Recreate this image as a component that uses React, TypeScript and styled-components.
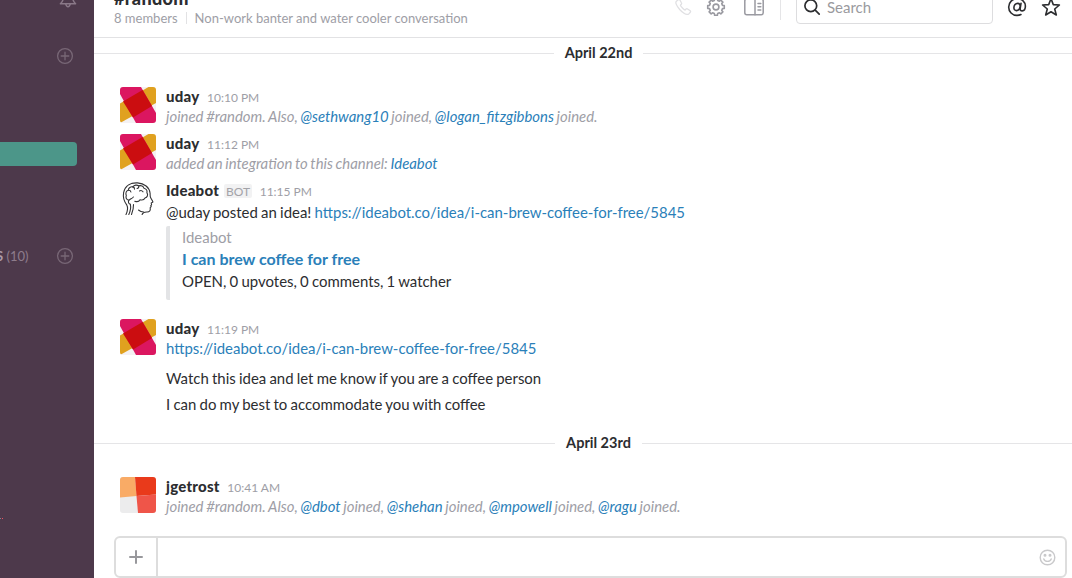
import React from 'react';
import styled, { createGlobalStyle } from 'styled-components';

const GlobalStyle = createGlobalStyle`
  * { box-sizing: border-box; }
  html, body { margin: 0; padding: 0; height: 100%; overflow: hidden; }
  body {
    font-family: Lato, 'Liberation Sans', sans-serif;
    font-size: 15px;
    color: #2c2d30;
    background: #fff;
  }
`;

const Layout = styled.div`
  display: flex;
  width: 1072px;
  height: 578px;
  overflow: hidden;
`;

const Sidebar = styled.aside`
  width: 94px;
  flex: none;
  height: 100%;
  background: #4d394b;
  overflow: hidden;
`;

const SidebarRow = styled.div<{ $gap?: number }>`
  display: flex;
  align-items: center;
  justify-content: space-between;
  height: 18px;
  padding-right: 20px;
  margin-top: ${(p) => p.$gap ?? 0}px;
`;

const BellSlot = styled.span`
  display: flex;
  margin-right: -3px;
`;

const SidebarLabel = styled.span`
  margin-left: -4px;
  font-size: 13px;
  line-height: 18px;
  color: #8d7c8b;
  white-space: pre;
`;

const SectionName = styled.span`
  font-weight: 700;
  color: #ab9ba9;
`;

const ActiveChannel = styled.div`
  width: 77px;
  height: 24px;
  margin-top: 77px;
  background: #4c9689;
  border-radius: 0 4px 4px 0;
`;

const Unread = styled.div`
  width: 3px;
  height: 1px;
  margin-top: 253px;
  background: linear-gradient(90deg, #8d7c8b 1px, #4d394b 1px 2px, #f0505f 2px);
`;

const Main = styled.main`
  flex: 1;
  min-width: 0;
  display: flex;
  flex-direction: column;
`;

const Header = styled.header`
  display: flex;
  justify-content: space-between;
  align-items: flex-start;
  height: 38px;
  flex: none;
  border-bottom: 1px solid #e2e2e4;
  padding-left: 20px;
`;

const ChannelInfo = styled.div`
  margin-top: -13px;
`;

const ChannelName = styled.h1`
  margin: 0;
  font-size: 18px;
  font-weight: 900;
  line-height: 22px;
  letter-spacing: 0.35px;
`;

const ChannelMeta = styled.div`
  display: flex;
  align-items: center;
  height: 18px;
  font-size: 13px;
  line-height: 18px;
  color: #9e9ea6;
  white-space: nowrap;
`;

const MetaRule = styled.span`
  width: 1px;
  height: 12px;
  margin: 0 8px;
  background: #e2e2e4;
`;

const Tools = styled.div`
  display: flex;
  align-items: center;
  height: 32px;
  margin-top: -9px;
  padding-right: 11px;
`;

const Tool = styled.span<{ $left?: number }>`
  display: flex;
  margin-left: ${(p) => p.$left ?? 0}px;
`;

const ToolRule = styled.span`
  width: 1px;
  height: 27px;
  margin-left: 16px;
  margin-right: 15px;
  margin-bottom: 1px;
  background: #e5e5e7;
`;

const Search = styled.div`
  display: flex;
  align-items: center;
  width: 197px;
  height: 32px;
  margin-top: 1px;
  padding: 0 0 2px 6px;
  border: 1px solid #dddddf;
  border-radius: 4px;
  color: #9a9a9e;
  gap: 6px;
`;

const DayDivider = styled.div<{ $gap: number }>`
  display: flex;
  align-items: center;
  height: 20px;
  margin-top: ${(p) => p.$gap}px;
  font-weight: 700;
  font-size: 14.5px;
  line-height: 20px;
  gap: 11px;
  margin-right: -31px;

  &::before, &::after {
    content: '';
    flex: 1;
    height: 1px;
    background: #e5e5e7;
  }
`;

const Feed = styled.section`
  flex: 1;
  min-height: 0;
  overflow: hidden;
`;

const Row = styled.article<{ $gap: number }>`
  display: flex;
  gap: 10px;
  padding-left: 26px;
  margin-top: ${(p) => p.$gap}px;
`;

const Avatar = styled.div`
  width: 36px;
  height: 36px;
  flex: none;
  border-radius: 3px;
  overflow: hidden;
  svg { display: block; }
`;

const Body = styled.div`
  flex: 1;
  margin-top: -1px;
  white-space: nowrap;
`;

const Meta = styled.div`
  display: flex;
  align-items: baseline;
  height: 20px;
  line-height: 20px;
`;

const Author = styled.span`
  font-weight: 900;
  letter-spacing: 0.25px;
`;

const Bot = styled.span`
  margin-left: 5px;
  padding: 1px 2px 0;
  font-size: 12px;
  line-height: 13px;
  color: #a3a3a8;
  background: #f2f2f3;
  border-radius: 2px;
`;

const Time = styled.span`
  margin-left: 7.5px;
  font-size: 12px;
  color: #9e9ea6;
`;

const Event = styled.div`
  height: 20px;
  line-height: 20px;
  font-size: 14.9px;
  font-style: italic;
  word-spacing: -0.8px;
  color: #9e9ea6;
`;

const Line = styled.div<{ $gap?: number }>`
  height: 22px;
  line-height: 22px;
  margin-top: ${(p) => p.$gap ?? 0}px;
  font-size: 14.95px;
  word-spacing: -0.6px;
`;

const Link = styled.a`
  color: #2a80b9;
`;

const Attachment = styled.div`
  height: 74px;
  margin-top: 3px;
  padding-left: 12px;
  border-left: 4px solid #e3e4e6;
  border-radius: 2px;
`;

const Source = styled(Line)`
  color: #9e9ea6;
`;

const Title = styled(Line)`
  font-size: 16px;
  font-weight: 700;
  word-spacing: 0;
  color: #2a80b9;
`;

const Composer = styled.footer`
  display: flex;
  height: 42px;
  flex: none;
  margin: 0 5px 0 20px;
  border: 2px solid #dddddd;
  border-radius: 6px;
`;

const AddButton = styled.button`
  display: flex;
  align-items: center;
  justify-content: center;
  width: 42px;
  padding: 0 1px 0 0;
  border: 0;
  border-right: 2px solid #dddddd;
  background: none;
`;

const Field = styled.div`
  flex: 1;
  display: flex;
  align-items: center;
  justify-content: flex-end;
  padding-right: 9px;
`;

const CirclePlus = () => (
  <svg width="18" height="18" viewBox="0 0 18 18" fill="none" stroke="#786776" strokeWidth="1.3" strokeLinecap="round">
    <circle cx="9" cy="9" r="7.4" />
    <path d="M9 5.2v7.6M5.2 9h7.6" />
  </svg>
);

const Bell = () => (
  <svg width="18" height="18" viewBox="0 0 18 18" fill="none" stroke="#8a7988" strokeWidth="1.5" strokeLinejoin="round" strokeLinecap="round">
    <path d="M9 1.5C5.6 1.5 4.6 4.5 4.3 8c-.2 2.8-1 4-2.9 5.700h15.200C14.700 12 13.900 10.800 13.700 8 13.400 4.500 12.400 1.500 9 1.500z" />
    <path d="M6.800 14.200c.4 1.700 1.200 2.500 2.200 2.500s1.800-.8 2.200-2.500" />
  </svg>
);

const Phone = () => (
  <svg width="18" height="18" viewBox="0 0 18 18" fill="none" stroke="#e0e0e3" strokeWidth="1.3" strokeLinejoin="round">
    <path d="M4.300 1.700 2.400 3.200C1.200 4.200 2 7.300 5.700 11.500c4 4.300 7.500 5.600 9.100 4.400l1.500-1.600c.5-.5.4-1.100-.1-1.500l-2.600-1.900c-.5-.4-1.100-.3-1.500.1l-1 1c-.8-.1-4.600-3.800-4.700-4.900l.9-.9c.4-.4.4-.9.1-1.400L5.800 1.900c-.4-.5-1-.6-1.500-.2z" />
  </svg>
);

const gearPath = (() => {
  const points: string[] = [];
  const teeth = 8;
  for (let i = 0; i < teeth; i++) {
    const base = (i * 2 * Math.PI) / teeth - Math.PI / 2;
    [[-0.25, 6.7], [-0.17, 8.4], [0.17, 8.4], [0.25, 6.7]].forEach(([offset, radius]) => {
      points.push(`${(10 + radius * Math.cos(base + offset)).toFixed(2)} ${(10 + radius * Math.sin(base + offset)).toFixed(2)}`);
    });
  }
  return `M${points.join('L')}Z`;
})();

const Gear = () => (
  <svg width="20" height="20" viewBox="0 0 20 20" fill="none" stroke="#9a9aa1" strokeWidth="1.6" strokeLinejoin="round">
    <path d={gearPath} />
    <circle cx="10" cy="10" r="2.9" />
  </svg>
);

const Panel = () => (
  <svg width="20" height="18" viewBox="0 0 20 18" fill="none" stroke="#9a9aa1" strokeWidth="1.5" strokeLinecap="round">
    <rect x=".8" y="1" width="18.4" height="15.8" rx="2" />
    <path d="M11 1v15.800M14 5.500h2.800M14 8.800h2.800M14 12h2.800" />
  </svg>
);

const Magnifier = () => (
  <svg width="18" height="18" viewBox="0 0 18 18" fill="none" stroke="#2c2d30" strokeWidth="1.7" strokeLinecap="round">
    <circle cx="7.8" cy="7.8" r="5.9" />
    <path d="m12.200 12.200 4 4" />
  </svg>
);

const At = () => (
  <svg width="20" height="20" viewBox="0 0 20 20" fill="none" stroke="#2c2d30" strokeWidth="1.6" strokeLinecap="round">
    <path d="M14 17.500c-1.200.6-2.500.9-4 .9A8.200 8.200 0 0 1 1.700 10 8.300 8.300 0 0 1 10 1.700c4.900 0 8.400 3.100 8.400 7.400 0 2.900-1.200 4.800-3.200 4.800-1.600 0-2.200-1-2-2.500l.8-5" />
    <path d="M13.100 9.900c-.4 2.300-1.800 3.700-3.600 3.700-1.600 0-2.600-1.200-2.600-2.900 0-2.400 1.600-4.300 3.800-4.300 1.700 0 2.700 1.300 2.400 3.500z" />
  </svg>
);

const Star = () => (
  <svg width="20" height="20" viewBox="0 0 20 20" fill="none" stroke="#2c2d30" strokeWidth="1.6" strokeLinejoin="round">
    <path d="m10 1.700 2.300 5.900 6.100.4-4.700 4 1.600 6L10 14.700 4.700 18l1.600-6L1.600 8l6.100-.4z" />
  </svg>
);

const Plus = () => (
  <svg width="14" height="14" viewBox="0 0 14 14" stroke="#98989c" strokeWidth="2" strokeLinecap="round">
    <path d="M7 1v12M1 7h12" />
  </svg>
);

const Smile = () => (
  <svg width="17" height="17" viewBox="0 0 17 17" fill="none" stroke="#c9c9cb" strokeWidth="1.4" strokeLinecap="round">
    <circle cx="8.500" cy="8.500" r="7.300" />
    <path d="M4.800 10c1 3.100 6.400 3.100 7.400 0" />
    <circle cx="6" cy="6.300" r=".8" fill="#c9c9cb" />
    <circle cx="11" cy="6.300" r=".8" fill="#c9c9cb" />
  </svg>
);

const UdayAvatar = () => (
  <Avatar>
    <svg width="36" height="36" viewBox="0 0 36 36">
      <rect width="36" height="36" fill="#f4f1f3" />
      <path d="M0 16.500 28.500 0H36v16L0 36z" fill="#e0a11f" />
      <path d="M0 0h21l15 26v10H16L0 7z" fill="#db1660" />
      <path d="M3 14.500 22.500 3 32 19 13 30.500z" fill="#cb0d10" />
    </svg>
  </Avatar>
);

const JgetrostAvatar = () => (
  <Avatar>
    <svg width="36" height="36" viewBox="0 0 36 36">
      <rect width="36" height="36" fill="#ececed" />
      <path d="M0 0h15l1.500 19L0 20.500z" fill="#f9ab66" />
      <path d="M15 0h21v17.500L16.500 19z" fill="#e93a1b" />
      <path d="M16.500 19 36 17.500V36H18z" fill="#ef5549" />
    </svg>
  </Avatar>
);

const BotAvatar = () => (
  <Avatar>
    <svg width="36" height="36" viewBox="0 0 36 36" fill="none" stroke="#343436" strokeWidth="1.1" strokeLinecap="round" strokeLinejoin="round">
      <path d="M6 33.500c1.700-3.600 2.400-6.500.7-9.700C4.200 20.600 2.800 16.300 3.600 11.700 5 4.600 10.800 1.500 17.500 1.900c6.800.4 12 4.300 12.600 10.400.1 2-.2 3 .7 4.600l2 3.500c.4.8-.4 1.100-1.600 1.500l.4 2-.8.8.4 1-1 1c.5 3-.7 4.300-3.100 4.300-2.500-.1-4-.2-5 2.500" />
      <path d="M18.500 29c1.400 1.300 3 2 5.200 2" />
      <path d="M8.800 33.500c1.900-4 2.400-6.500 1.500-10.300M11.500 33.500c1.500-4 2.200-6.500 2-10" />
      <path d="M10.300 23.200c-2-.4-2.300-2.600-1.400-4-2.600-.4-3.400-2.600-2.600-4.700-1.100-2.400.1-4.900 1.900-5.200.3-2.600 2.500-3.900 4.600-3.400 1.500-2 4.200-2.300 5.900-1 2.600-.8 4.700.5 5.200 2.300 2.300.4 3.600 2.400 3 4.400 1.500 2.300.4 4.900-1.900 5.400-1 2-3.200 2.300-5 1.700-1.200 2.200-3.500 2.200-5.200 1.500" />
      <path d="M8.200 9.300c1.500-.2 2.500.6 2.700 1.700M12.800 5.900c1.400.4 1.900 1.300 1.700 2.300M18.700 4.900c.4 1.400-.4 2.300-1.600 2.600M8.900 19.200c1.900-1.600 3-1.400 4.500-3.200M19.500 9.900c1.300-.7 2.700-.2 3.500.9" />
    </svg>
  </Avatar>
);

const IDEA_URL = 'https://ideabot.co/idea/i-can-brew-coffee-for-free/5845';

export default function App() {
  return (
    <Layout>
      <GlobalStyle />
      <Sidebar>
        <SidebarRow $gap={-10}>
          <span />
          <BellSlot><Bell /></BellSlot>
        </SidebarRow>
        <SidebarRow $gap={39}>
          <span />
          <CirclePlus />
        </SidebarRow>
        <ActiveChannel />
        <SidebarRow $gap={81}>
          <SidebarLabel><SectionName>S</SectionName> (10)</SidebarLabel>
          <CirclePlus />
        </SidebarRow>
        <Unread />
      </Sidebar>
      <Main>
        <Header>
          <ChannelInfo>
            <ChannelName>#random</ChannelName>
            <ChannelMeta>
              8 members<MetaRule />Non-work banter and water cooler conversation
            </ChannelMeta>
          </ChannelInfo>
          <Tools>
            <Tool><Phone /></Tool>
            <Tool $left={14}><Gear /></Tool>
            <Tool $left={18}><Panel /></Tool>
            <ToolRule />
            <Search><Magnifier /><span>Search</span></Search>
            <Tool $left={14}><At /></Tool>
            <Tool $left={14}><Star /></Tool>
          </Tools>
        </Header>
        <Feed>
          <DayDivider $gap={5}>April 22nd</DayDivider>
          <Row $gap={24}>
            <UdayAvatar />
            <Body>
              <Meta><Author>uday</Author><Time>10:10 PM</Time></Meta>
              <Event>
                joined #random. Also, <Link>@sethwang10</Link> joined, <Link>@logan_fitzgibbons</Link> joined.
              </Event>
            </Body>
          </Row>
          <Row $gap={8}>
            <UdayAvatar />
            <Body>
              <Meta><Author>uday</Author><Time>11:12 PM</Time></Meta>
              <Event>added an integration to this channel: <Link>Ideabot</Link></Event>
            </Body>
          </Row>
          <Row $gap={8}>
            <BotAvatar />
            <Body>
              <Meta><Author>Ideabot</Author><Bot>BOT</Bot><Time>11:15 PM</Time></Meta>
              <Line $gap={1}>@uday posted an idea! <Link>{IDEA_URL}</Link></Line>
              <Attachment>
                <Source>Ideabot</Source>
                <Title>I can brew coffee for free</Title>
                <Line>OPEN, 0 upvotes, 0 comments, 1 watcher</Line>
              </Attachment>
            </Body>
          </Row>
          <Row $gap={19}>
            <UdayAvatar />
            <Body>
              <Meta><Author>uday</Author><Time>11:19 PM</Time></Meta>
              <Line $gap={-1}><Link>{IDEA_URL}</Link></Line>
              <Line $gap={8}>Watch this idea and let me know if you are a coffee person</Line>
              <Line $gap={4}>I can do my best to accommodate you with coffee</Line>
            </Body>
          </Row>
          <DayDivider $gap={18}>April 23rd</DayDivider>
          <Row $gap={24}>
            <JgetrostAvatar />
            <Body>
              <Meta><Author>jgetrost</Author><Time>10:41 AM</Time></Meta>
              <Event>
                joined #random. Also, <Link>@dbot</Link> joined, <Link>@shehan</Link> joined, <Link>@mpowell</Link> joined, <Link>@ragu</Link> joined.
              </Event>
            </Body>
          </Row>
        </Feed>
        <Composer>
          <AddButton aria-label="Add"><Plus /></AddButton>
          <Field><Smile /></Field>
        </Composer>
      </Main>
    </Layout>
  );
}
